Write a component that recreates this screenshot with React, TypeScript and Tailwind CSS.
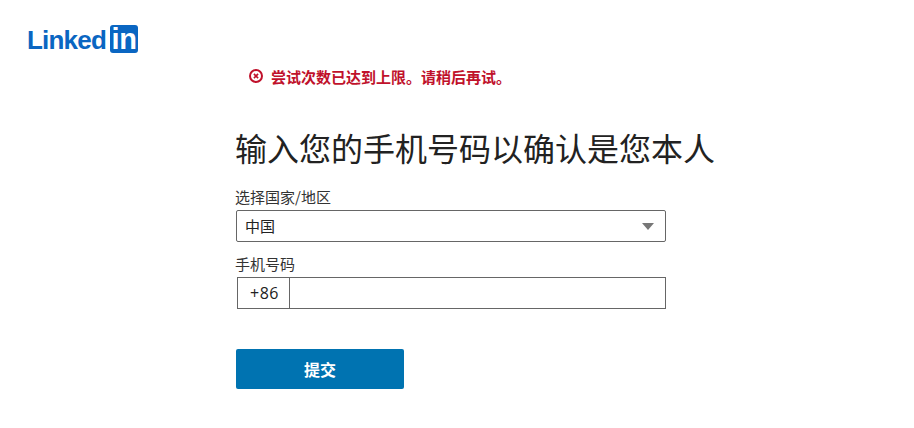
import React from 'react';

const cjk = { fontFamily: '"Noto Sans CJK SC", "Liberation Sans", sans-serif' };

const Logo: React.FC = () => (
    <div className="flex items-center h-[28px]">
        <span className="-ml-[1px] w-[83px] text-[26px] font-bold leading-none text-[#0a66c2] tracking-[-0.8px] font-['Liberation_Sans',sans-serif] pt-[2px]">Linked</span>
        <span className="w-[28px] h-[28px] rounded-[3px] bg-[#0a66c2] text-white flex items-end justify-center pb-[2px] text-[29px] font-bold leading-[24px] tracking-[-0.5px] font-['Liberation_Sans',sans-serif]">in</span>
    </div>
);

const App: React.FC = () => {
    return (
        <div className="w-[914px] h-[428px] bg-white overflow-hidden text-[#222]" style={cjk}>
            <div className="pl-[28px] pt-[25px]">
                <Logo />
            </div>
            <div className="pl-[236px] w-[666px]">
                <div className="mt-[15px] pl-[12px] flex items-center h-[18px] text-[#c0112b] -translate-y-[1px]">
                    <svg width="16" height="16" viewBox="0 0 16 16" fill="none" stroke="currentColor" strokeWidth="2">
                        <circle cx="8" cy="8" r="6" />
                        <path d="M5.9 5.9l4.2 4.2M10.1 5.9l-4.2 4.2" strokeWidth="1.6" />
                    </svg>
                    <span className="ml-[7px] text-[15px] font-bold leading-none whitespace-nowrap">尝试次数已达到上限。请稍后再试。</span>
                </div>
                <h1 className="mt-[39px] -ml-[1px] text-[32px] font-normal leading-[44px] text-[#222] whitespace-nowrap">输入您的手机号码以确认是您本人</h1>
                <label className="block mt-[18px] -ml-[1px] text-[15px] leading-[20px] text-[#333]">选择国家/地区</label>
                <div className="mt-[3px] h-[32px] border border-[#666] rounded-[2px] flex items-center justify-between pl-[8px] pr-[11px]">
                    <span className="text-[15px] text-[#222]">中国</span>
                    <span className="w-0 h-0 border-l-[6px] border-r-[6px] border-t-[7px] border-l-transparent border-r-transparent border-t-[#777]" />
                </div>
                <label className="block mt-[12px] -ml-[1px] text-[15px] leading-[20px] text-[#333]">手机号码</label>
                <div className="mt-[3px] ml-[1px] h-[32px] border border-[#666] flex items-stretch">
                    <div className="w-[52px] border-r border-[#666] flex items-center justify-center pl-[2px] text-[16px] tracking-[0.5px] font-['Open_Sans',sans-serif]">+86</div>
                    <div className="flex-1" />
                </div>
                <button className="mt-[40px] w-[168px] h-[40px] bg-[#0073b1] rounded-[2px] text-white text-[16px] font-bold">提交</button>
            </div>
        </div>
    );
};

export default App;
